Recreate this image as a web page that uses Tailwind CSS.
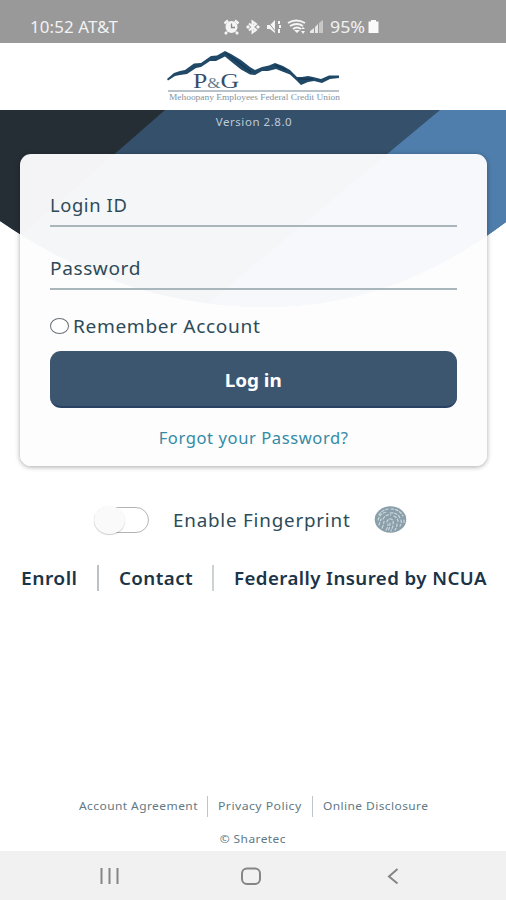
<!DOCTYPE html>
<html lang="en">
<head>
<meta charset="utf-8">
<title>Login</title>
<script src="https://cdn.jsdelivr.net/npm/@tailwindcss/browser@4"></script>
</head>
<body class="bg-white">
<div class="relative flex h-[900px] w-[506px] flex-col overflow-hidden whitespace-nowrap bg-white font-['Noto_Sans',sans-serif] text-[#2d4b58]">
  <header class="flex h-[43px] shrink-0 items-end bg-[#999] pb-[5px] pl-[30px] text-[16px] leading-[22px] text-[#f2f2f2]">
    <span class="w-[193px]"><span class="inline-block origin-left scale-x-[1.055] tracking-[0.1px]">10:52 AT&amp;T</span></span>
    <svg class="h-[22px] w-[104px] shrink-0" viewBox="223 16 104 22" fill="#f5f5f5">
      <circle cx="231.500" cy="27" r="6"/><path d="M224.500 23.500l3.500-3M238.500 23.500l-3.500-3M227 32l-2 2M236 32l2 2" stroke="#f5f5f5" stroke-width="2.500"/><path d="M231.500 23.500V27.500H235" fill="none" stroke="#888" stroke-width="1.300"/>
      <path d="M249 23.500l7 6.500-3.500 2.500V21.500l3.500 2.500-7 6.500" fill="none" stroke="#f5f5f5" stroke-width="2"/><path d="M246 27l2-2 2 2-2 2zM256 27l2-2 2 2-2 2z"/>
      <path d="M267 25h3l5-5v13l-5-4h-3zM278 21h2v3h-2zM279 25h2v3h-2zM278 29h2v4h-2z"/><path d="M266 20l11 13" stroke="#999" stroke-width="1"/>
      <g fill="none" stroke="#f5f5f5" stroke-width="1.900"><path d="M288 23q8-5 17 0M290 26q7-4 13 0M293 29q4-3 8 0"/></g><path d="M294 30h6l-3 3zM301 29l2-2 2 2zM301 31h4l-2 3z"/>
      <path d="M310 33v-2l4-3v5zM315 33v-6l3-3v9z" opacity=".85"/><path d="M319 33V23l4-3v13z" opacity=".5"/>
    </svg>
    <span class="ml-[3px] w-[36px]"><span class="inline-block origin-left scale-x-[1.110]">95%</span></span>
    <svg class="ml-[2px] h-[22px] w-[11px]" viewBox="0 0 11 22" fill="#fafafa"><path d="M3 4h5v1.500h2.500V17H.5V5.500H3z"/></svg>
  </header>

  <div class="flex h-[67px] shrink-0 justify-center bg-white">
    <svg class="h-[67px] w-[180px]" viewBox="163 43 180 67">
      <path d="M167 79L174 73 180 71 185 70 194 63.500 201 63 211 56 217 55.500 225 51 231 54 241 60 250 67 255 70 262 67 269 65.500 275 63 283 66 290 70 297 77 302 77 308 76 313 77 321 79 329 75.500 339 75.500 339 78 330 79 322 83 314 81 308 82 301 85 296 80 290 74.500 281 71 276 69 268 71 262 71 255 75 250 74.500 241 69.500 231 61.500 225 56.500 216 61 210 61 201 67 196 68 187 74 180 75 175 76 168 80.500Z" fill="#204867"/>
      <path d="M226 53L239 63 251 72M275 65L286 70M298 79L313 79" fill="none" stroke="#143955" stroke-width="1.500"/>
      <text x="193" y="87.500" font-family="Liberation Serif, serif" font-size="21" textLength="46" lengthAdjust="spacingAndGlyphs" fill="#354f6b">P<tspan font-size="14" fill="#667b8b">&amp;</tspan>G</text>
      <path d="M168 91h171" stroke="#a1afb8" stroke-width="1.500"/>
      <text x="169" y="99.500" font-family="Liberation Serif, serif" font-size="8" textLength="171" lengthAdjust="spacingAndGlyphs" fill="#8295a1">Mehoopany Employees Federal Credit Union</text>
    </svg>
  </div>

  <main class="relative flex h-[741px] shrink-0 flex-col">
    <svg class="absolute left-0 top-0 h-[200px] w-[506px]" viewBox="0 110 506 200">
      <defs><clipPath id="curve"><path d="M0 110H506V222C442 270 365 307 265 307C150 307 64 265 0 221Z"/></clipPath></defs>
      <g clip-path="url(#curve)"><path d="M0 110H506V310H0Z" fill="#35506b"/><path d="M0 110H165L0 254Z" fill="#262e35"/><path d="M440 110H506V310H200Z" fill="#4f7eac"/></g>
    </svg>
    <div class="relative h-[44px] pt-[4px] text-center text-[11.500px] leading-[16px] tracking-[0.550px] text-[#bdcbd8]"><span class="inline-block translate-x-px">Version 2.8.0</span></div>

    <section class="relative mx-auto flex h-[312px] w-[467px] flex-col rounded-[11px] bg-[#fdfdfe]/96 px-[30px] shadow-[0_1px_5px_rgba(0,0,0,0.35)]">
      <div class="mt-[35px] h-[38px] border-b-2 border-[#a9b6bc] text-[18px] leading-[32px] tracking-[0.600px]"><span class="inline-block origin-left scale-x-[1.020]">Login ID</span></div>
      <div class="mt-[25px] h-[38px] border-b-2 border-[#a9b6bc] text-[18px] leading-[32px] tracking-[0.550px]"><span class="inline-block origin-left scale-x-[1.060]">Password</span></div>
      <div class="mt-[22px] flex h-[28px] items-center text-[18px] tracking-[0.600px]">
        <span class="mr-[4px] h-[16px] w-[19px] rounded-[50%] border-[1.500px] border-[#697177] bg-white"></span><span class="inline-block origin-left scale-x-[1.062]">Remember Account</span>
      </div>
      <button class="mt-[11px] h-[57px] shrink-0 rounded-[11px] border-b-2 border-[#2a4364] bg-[#3c5670] pt-[3px] text-[18px] font-bold text-white"><span class="inline-block scale-x-[1.050]">Log in</span></button>
      <a class="mt-[18px] text-center text-[16px] leading-[24px] tracking-[0.550px] text-[#348ba5]"><span class="inline-block translate-x-px scale-x-[1.036]">Forgot your Password?</span></a>
    </section>

    <div class="mt-[37px] flex h-[34px] items-center pl-[94px]">
      <span class="relative h-[26px] w-[55px] rounded-full border border-[#b4b4b4] bg-white">
        <span class="absolute -left-[1px] -top-[2px] h-[28px] w-[31px] rounded-[50%] bg-[#fafafa] shadow-[0_1px_1px_rgba(0,0,0,0.2)]"></span>
      </span>
      <span class="ml-[24px] w-[178px] text-[18px] tracking-[0.750px]"><span class="inline-block origin-left scale-x-[1.045]">Enable Fingerprint</span></span>
      <svg class="ml-[23px] h-[28px] w-[33px]" viewBox="0 0 33 28"><ellipse cx="16.500" cy="13.500" rx="15.800" ry="13.200" fill="#8a9faa"/><g fill="none" stroke="#cdd8dd" stroke-width="1.200" stroke-linecap="round" stroke-dasharray="2.500 2"><path d="M5 9q3-5 9-6M17 3q8 0 12 7M4 14q2-7 9-8M16 7q7-1 10 5M5 19q1-3 2-6M9 13q3-5 8-4M20 10q4 2 4 6M8 22q2-4 2-7M13 16q1-4 4-3 3 1 2 5M12 24q2-3 2-6M16 17q0 4-2 8M19 20l-2 5M27 14q1 3-1 6M23 18q0 3-2 6M30 14v3"/></g></svg>
    </div>

    <nav class="mt-[28px] flex h-[26px] items-center pl-[21px] text-[17.500px] font-semibold text-[#1b3448]">
      <span class="w-[76px]"><span class="inline-block origin-left scale-x-[1.100] tracking-[0.400px]">Enroll</span></span><span class="h-[26px] w-[2px] bg-[#bbc3c6]"></span>
      <span class="ml-[20px] w-[93px]"><span class="inline-block origin-left scale-x-[1.070] tracking-[0.400px]">Contact</span></span><span class="h-[26px] w-[2px] bg-[#ccd2d4]"></span>
      <span class="ml-[20px] inline-block origin-left scale-x-[1.066] tracking-[0.400px]">Federally Insured by NCUA</span>
    </nav>

    <footer class="mt-[205px] flex h-[20px] items-center pl-[79px] text-[11.500px] tracking-[0.400px] text-[#627985]">
      <span class="w-[128px]"><span class="inline-block origin-left scale-x-[1.044]">Account Agreement</span></span><span class="h-[21px] w-px bg-[#bec5c8]"></span>
      <span class="ml-[10px] w-[94px]"><span class="inline-block origin-left scale-x-[1.070]">Privacy Policy</span></span><span class="h-[21px] w-px bg-[#bec5c8]"></span>
      <span class="ml-[10px] inline-block origin-left scale-x-[1.040]">Online Disclosure</span>
    </footer>
    <div class="mt-[15px] text-center text-[11.500px] leading-[16px] tracking-[0.400px] text-[#627985]"><span class="inline-block scale-x-[1.040]">© Sharetec</span></div>
  </main>

  <div class="h-[49px] shrink-0 bg-[#f1f1f1]">
    <svg class="h-[49px] w-[506px]" viewBox="0 851 506 49" fill="none" stroke="#858585" stroke-width="2"><path d="M101.500 868v16M109.500 868v16M117.500 868v16"/><rect x="242" y="868.500" width="18" height="15.500" rx="5"/><path d="M397.500 869L389 876.500 397.500 883.500"/></svg>
  </div>
</div>
</body>
</html>
